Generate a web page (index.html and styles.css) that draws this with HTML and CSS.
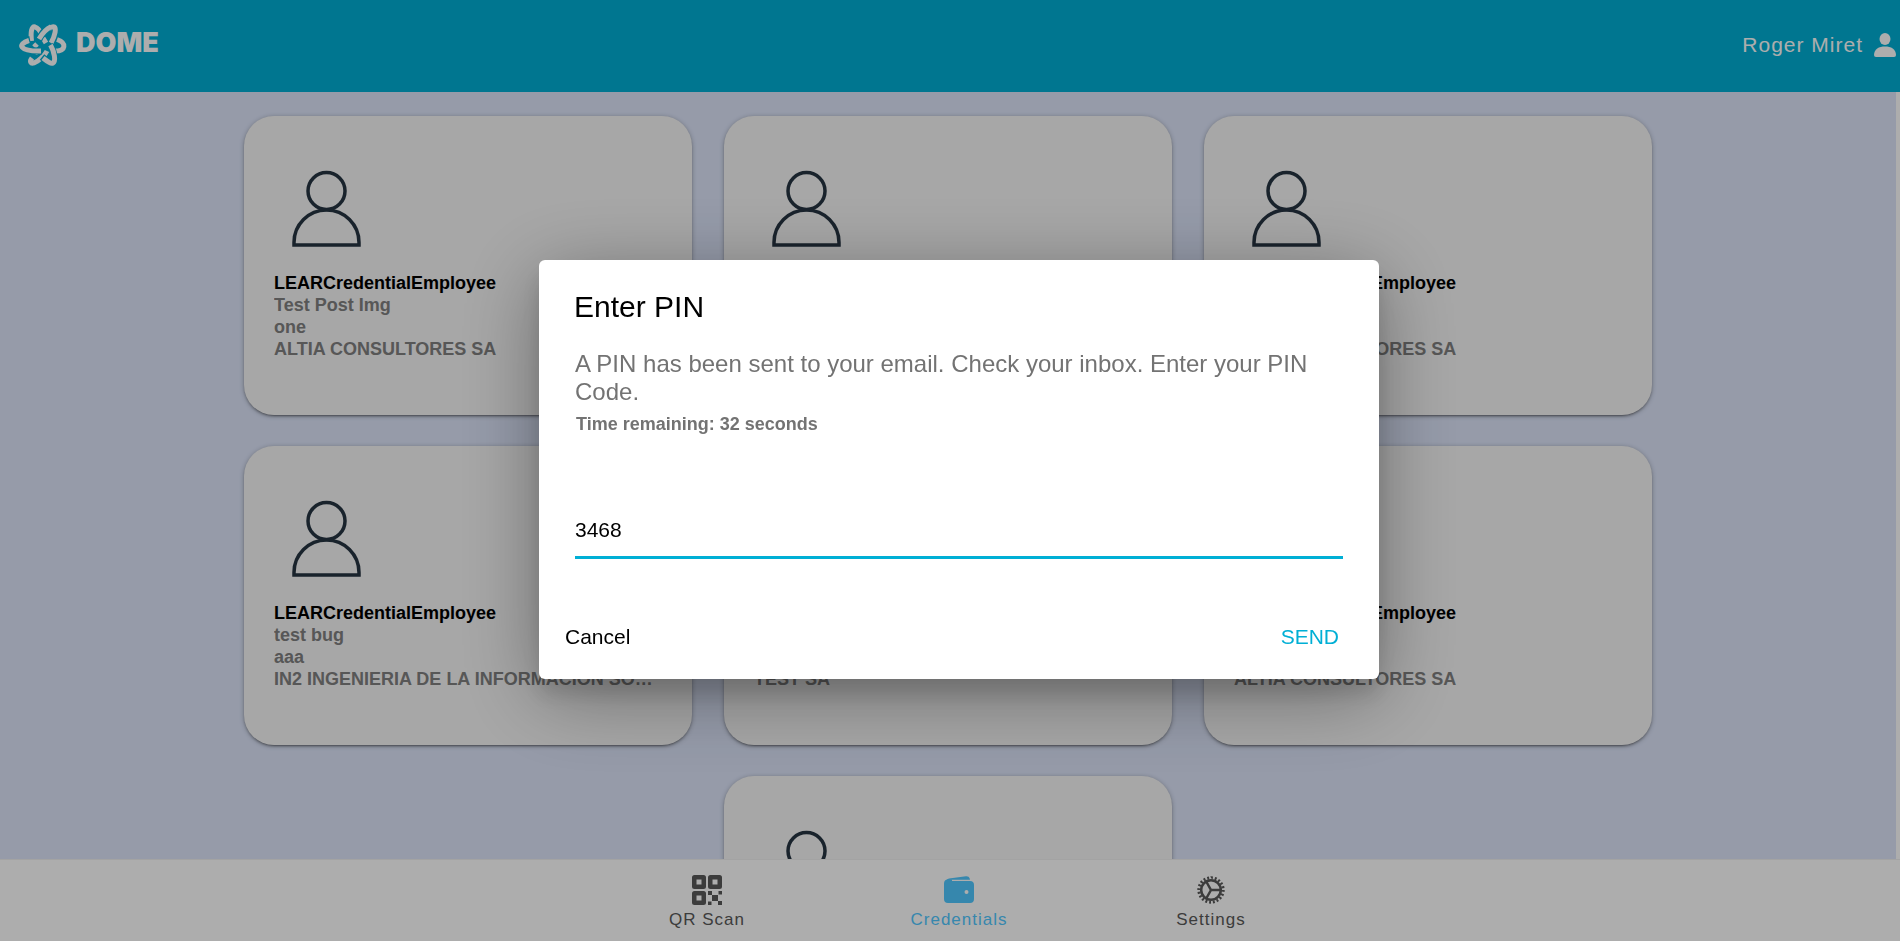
FILE: index.html
```html
<!DOCTYPE html>
<html lang="en">
<head>
<meta charset="utf-8">
<title>DOME Wallet</title>
<link rel="stylesheet" href="styles.css">
</head>
<body>
<svg class="sprite" aria-hidden="true">
  <symbol id="person" viewBox="0 0 70 78">
    <circle cx="34.500" cy="21" r="18.500"/>
    <path d="M2 75V72.500a32.500 32.500 0 0 1 65 0V75Z"/>
  </symbol>
</svg>
<div class="app">
  <header class="header">
    <a class="brand" href="#">
      <svg class="brand-mark" viewBox="0 0 50 44" aria-hidden="true">
        <g fill="none">
          <path class="gap" d="M31 23L25 15"/><path class="band" d="M14 35C11 39 13 41 16 40C21 38 27 32 29 28"/>
          <path class="gap" d="M36 16C39 9 39 3 35 3.500"/><path class="band" d="M33 20C37 13 39 4 35.500 3.800C34 3.600 32 5 31 6"/>
          <path class="band" d="M17 31L19 27M25 15L28 20M16 24L19 21"/>
          <path class="gap" d="M13 18C13 8 14 3 17 4C20 5 22 8 23 10"/><path class="band" d="M13.500 18C12.500 9 13.500 3 17 4C20 5 22 8 23.500 11"/>
          <path class="gap" d="M20 19C22 13 27 6 32 3.500"/><path class="band" d="M21 16C24 11 28 6 33 3.800"/>
          <path class="gap" d="M40 17C49 21 49 27 37 28"/><path class="band" d="M39 16.500C49 20 48 28 37 28"/>
          <path class="gap" d="M12 16.500C0 19 0 29 24 28"/><path class="band" d="M11 17.500C-1 21 1 28.500 23 28"/>
          <path class="gap" d="M24 34C30 39 33 41 35 40C38 38 36 28 32 22"/><path class="band" d="M25 35C30 39 33 41 35 40C38 38 36.500 29 32.500 22"/>
        </g>
      </svg>
      <span class="brand-name">DOME</span>
    </a>
    <button class="user" type="button">
      <span>Roger Miret</span>
      <svg class="user-icon" viewBox="0 0 22 24" aria-hidden="true"><ellipse cx="11" cy="6" rx="5.500" ry="6"/><path d="M0 22C0 16 5 13.500 11 13.500S22 16 22 22Q22 24 20 24H2Q0 24 0 22Z"/></svg>
    </button>
  </header>

  <main class="content">
    <div class="cards">
      <article class="card">
        <svg class="avatar" aria-hidden="true"><use href="#person"/></svg>
        <h2>LEARCredentialEmployee</h2><p>Test Post Img</p><p>one</p><p>ALTIA CONSULTORES SA</p>
      </article>
      <article class="card">
        <svg class="avatar" aria-hidden="true"><use href="#person"/></svg>
      </article>
      <article class="card">
        <svg class="avatar" aria-hidden="true"><use href="#person"/></svg>
        <h2>LEARCredentialEmployee</h2><p>&nbsp;</p><p>&nbsp;</p><p>ALTIA CONSULTORES SA</p>
      </article>
      <article class="card">
        <svg class="avatar" aria-hidden="true"><use href="#person"/></svg>
        <h2>LEARCredentialEmployee</h2><p>test bug</p><p>aaa</p><p>IN2 INGENIERIA DE LA INFORMACIÓN SO…</p>
      </article>
      <article class="card">
        <svg class="avatar" aria-hidden="true"><use href="#person"/></svg>
        <h2>&nbsp;</h2><p>&nbsp;</p><p>&nbsp;</p><p>TEST SA</p>
      </article>
      <article class="card">
        <svg class="avatar" aria-hidden="true"><use href="#person"/></svg>
        <h2>LEARCredentialEmployee</h2><p>&nbsp;</p><p>&nbsp;</p><p>ALTIA CONSULTORES SA</p>
      </article>
      <article class="card">
        <svg class="avatar" aria-hidden="true"><use href="#person"/></svg>
      </article>
    </div>
  </main>

  <nav class="tabs">
    <a class="tab" href="#">
      <svg class="tab-icon" viewBox="0 0 30 30" aria-hidden="true">
        <path fill-rule="evenodd" d="M2.500 0H11.500Q14 0 14 2.500V11.500Q14 14 11.500 14H2.500Q0 14 0 11.500V2.500Q0 0 2.500 0ZM4.500 4.500V9.500H9.500V4.500ZM18.500 0H27.500Q30 0 30 2.500V11.500Q30 14 27.500 14H18.500Q16 14 16 11.500V2.500Q16 0 18.500 0ZM20.500 4.500V9.500H25.500V4.500ZM2.500 16H11.500Q14 16 14 18.500V27.500Q14 30 11.500 30H2.500Q0 30 0 27.500V18.500Q0 16 2.500 16ZM4.500 20.500V25.500H9.500V20.500Z"/>
        <path d="M16 16h4v4h-4zM26.500 16h3.500v3.500h-3.500zM20 20h6v6h-6zM16 26.500h3.500v3.500h-3.500zM26 26h4v4h-4z"/>
      </svg>
      <span>QR Scan</span>
    </a>
    <a class="tab tab-active" href="#" aria-current="page">
      <svg class="tab-icon" viewBox="0 0 30 30" aria-hidden="true">
        <path d="M2 5.500Q3 4 5 3.500L22 1.200Q25 1 25.500 3L26 4.800H8.500Q5 4.800 2 5.500Z"/>
        <path fill-rule="evenodd" d="M4 4.500H8V6H26Q30 6 30 10V24Q30 28 26 28H4Q0 28 0 24V8.500Q0 4.500 4 4.500ZM22.500 15a2 2 0 1 0 0 4a2 2 0 1 0 0-4Z"/>
        <path class="slit" d="M8 5.500H27"/>
      </svg>
      <span>Credentials</span>
    </a>
    <a class="tab" href="#">
      <svg class="tab-icon" viewBox="0 0 30 30" aria-hidden="true">
        <g fill="none" stroke="currentColor">
          <circle cx="15" cy="15" r="12.200" stroke-width="3" pathLength="80" stroke-dasharray="2 2"/>
          <circle cx="15" cy="15" r="9.800" stroke-width="2.500"/>
          <path stroke-width="2.500" d="M24 15H15L10.500 7M15 15L10.500 23"/>
        </g>
      </svg>
      <span>Settings</span>
    </a>
  </nav>
</div>

<div class="backdrop">
  <form class="dialog" role="dialog" aria-labelledby="pin-title">
    <h1 id="pin-title">Enter PIN</h1>
    <label class="message" for="pin">A PIN has been sent to your email. Check your inbox. Enter your PIN Code.</label>
    <p class="timer">Time remaining: 32 seconds</p>
    <input class="pin" id="pin" type="text" inputmode="numeric" value="3468">
    <div class="actions">
      <button class="action" type="button">Cancel</button>
      <button class="action action-primary" type="button">SEND</button>
    </div>
  </form>
</div>
</body>
</html>
```
FILE: styles.css
```css
* {
  box-sizing: border-box;
  margin: 0;
}

body {
  font-family: "Liberation Sans", Arial, sans-serif;
  color: #000;
}

button,
input {
  font: inherit;
  border: 0;
  padding: 0;
  background: none;
}

a {
  text-decoration: none;
}

.sprite {
  display: none;
}

.app {
  display: flex;
  flex-direction: column;
  height: 100vh;
  background: #fff;
}

.header {
  flex: none;
  display: flex;
  align-items: center;
  justify-content: space-between;
  height: 92px;
  padding: 0 4px 3px 18px;
  background: #00afd5;
  color: #fff;
}

.brand {
  display: flex;
  align-items: center;
  gap: 8px;
  color: inherit;
}

.brand-mark {
  width: 50px;
  height: 44px;
}

.gap {
  stroke: #00afd5;
  stroke-width: 7;
}

.band {
  stroke: #fff;
  stroke-width: 5;
}

.brand-name {
  padding-bottom: 3px;
  font: 900 27px/30px Inter, sans-serif;
}

.user {
  display: flex;
  align-items: center;
  gap: 11px;
  color: inherit;
  font-size: 21px;
  letter-spacing: 1px;
}

.user-icon {
  width: 22px;
  height: 24px;
  fill: currentColor;
}

.content {
  flex: 1;
  min-height: 0;
  overflow: hidden;
  padding: 24px 0;
  background: #dde5fa;
  border-right: 4px solid #fff;
}

.cards {
  display: flex;
  flex-wrap: wrap;
  justify-content: center;
  gap: 31px 32px;
  max-width: 1408px;
  margin: 0 auto;
}

.card {
  width: calc((100% - 64px) / 3);
  min-height: 299px;
  padding: 54px 30px 20px;
  border-radius: 30px;
  background: #f6f6f6;
  box-shadow: 0 3px 1px -2px rgba(0, 0, 0, 0.2), 0 2px 2px 0 rgba(0, 0, 0, 0.14), 0 1px 5px 0 rgba(0, 0, 0, 0.3);
  color: #808080;
  font-size: 18px;
  line-height: 22px;
}

.card h2 {
  color: #000;
  font-size: inherit;
}

.card p {
  overflow: hidden;
  font-weight: bold;
  text-overflow: ellipsis;
  white-space: nowrap;
}

.avatar {
  display: block;
  width: 70px;
  height: 78px;
  margin: 0 0 24px 18px;
  fill: none;
  stroke: #263442;
  stroke-width: 3.5;
}

.tabs {
  flex: none;
  display: flex;
  justify-content: center;
  gap: 12px;
  height: 82px;
  padding-left: 18px;
  border-top: 1px solid #f0f0f0;
}

.tab {
  display: flex;
  flex-direction: column;
  align-items: center;
  width: 240px;
  padding-top: 15px;
  gap: 4px;
  color: #595959;
  font-size: 18px;
  line-height: 22px;
}

.tab span {
  font-size: 17px;
  letter-spacing: 1px;
}

.tab-active {
  color: #50c8ff;
}

.tab-icon {
  width: 30px;
  height: 30px;
  fill: currentColor;
}

.slit {
  stroke: #fff;
  stroke-width: 1;
}

.backdrop {
  position: fixed;
  inset: 0;
  display: flex;
  align-items: center;
  justify-content: center;
  padding: 0 0 2px 18px;
  background: rgba(0, 0, 0, 0.32);
}

.dialog {
  width: 840px;
  max-width: 100%;
  padding: 28px 36px 18px;
  border-radius: 6px;
  background: #fff;
  box-shadow: 0 16px 20px rgba(0, 0, 0, 0.12), 0 16px 80px rgba(0, 0, 0, 0.36);
  font-size: 21px;
}

.dialog h1 {
  margin: 0 -1px 24px;
  font-size: 30px;
  font-weight: normal;
  line-height: 38px;
}

.message {
  display: block;
  color: #737373;
  font-size: 24px;
  line-height: 28px;
}

.timer {
  padding-left: 1px;
  margin: 8px 0 62px;
  color: #737373;
  font-size: 18px;
  font-weight: bold;
  line-height: 20px;
}

.pin {
  display: block;
  width: 100%;
  height: 63px;
  padding-top: 8px;
  border-bottom: 3px solid #00afd5;
  outline: none;
}

.actions {
  display: flex;
  justify-content: space-between;
  margin: 54px -4px 0 -18px;
}

.action {
  padding: 12px 8px;
  line-height: 24px;
}

.action-primary {
  color: #00afd5;
}
```
